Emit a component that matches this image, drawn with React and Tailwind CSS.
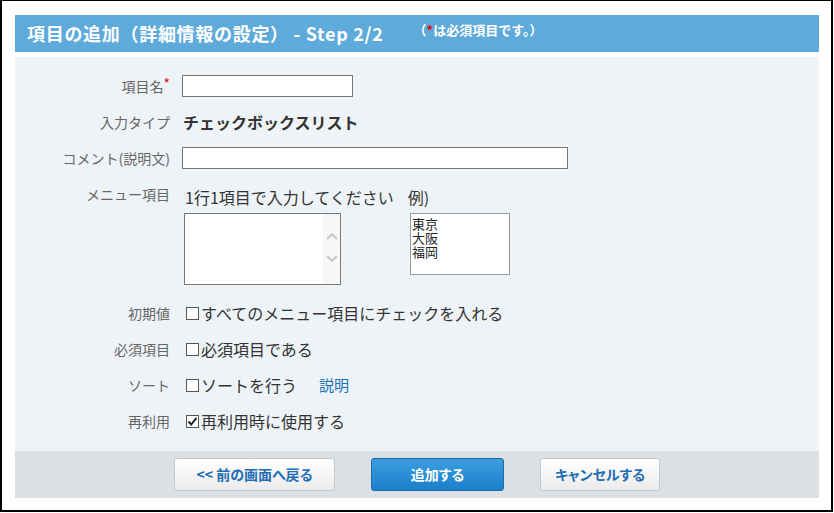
import React from 'react';

const jp = { fontFamily: '"Noto Sans CJK JP", "Noto Sans", sans-serif' };

function Box({ checked }) {
    return (
        <span className="inline-flex w-[13px] h-[13px] border border-[#555] bg-white items-center justify-center mr-[2px] shrink-0">
            {checked && (
                <svg width="11" height="11" viewBox="0 0 11 11">
                    <path d="M1.5 5.5 L4.2 8.5 L9.5 1.8" fill="none" stroke="#222" strokeWidth="2" />
                </svg>
            )}
        </span>
    );
}

function Row({ label, required, children }) {
    return (
        <div className="flex h-9 items-center">
            <div className="w-[155px] text-right text-[14px] text-[#666] shrink-0">
                {label}
                {required && <span className="text-[#e60012] relative -top-[3px]">*</span>}
            </div>
            <div className="pl-3 flex items-center text-[16px] text-[#333]">{children}</div>
        </div>
    );
}

export default function App() {
    return (
        <div className="w-[834px] h-[513px] bg-white" style={jp}>
            <div className="w-[833px] h-[512px] border-l-2 border-t border-r-2 border-b-2 border-black pl-[13px] pt-[14px]">
                <div className="w-[804px]">
                    {/* header */}
                    <div className="h-[37px] bg-[#5eaadb] flex items-center pl-3 text-white">
                        <span className="text-[18px] font-bold tracking-[0.7px]">項目の追加（詳細情報の設定） - Step 2/2</span>
                        <span className="ml-[30px] mb-[7px] text-[13px] font-bold">
                            （<span className="text-[#e60012]">*</span>は必須項目です。）
                        </span>
                    </div>

                    {/* form */}
                    <div className="mt-[5px] bg-[#eef3f7] pt-[11px] pb-3">
                        <Row label="項目名" required>
                            <input className="w-[171px] h-[22px] border border-[#767676] bg-white outline-none" />
                        </Row>
                        <Row label="入力タイプ">
                            <span className="ml-px font-bold">チェックボックスリスト</span>
                        </Row>
                        <Row label="コメント(説明文)">
                            <input className="w-[386px] h-[22px] border border-[#767676] bg-white outline-none" />
                        </Row>

                        <div className="flex items-start h-[119px]">
                            <div className="w-[155px] h-9 leading-9 text-right text-[14px] text-[#666] shrink-0">メニュー項目</div>
                            <div className="pl-3 text-[16px] text-[#333]">
                                <div className="h-[37px] flex items-center pl-[3px] pt-1">
                                    1行1項目で入力してください<span className="ml-[14px]">例)</span>
                                </div>
                                <div className="flex items-start">
                                    <div className="ml-[2px] w-[157px] h-[72px] border border-[#777] bg-white flex justify-end">
                                        <div className="w-[17px] h-full bg-[#f7f7f7] flex flex-col items-center pt-[19px] gap-[15px]">
                                            <svg width="12" height="7" viewBox="0 0 12 7">
                                                <path d="M1 6 L6 1.2 L11 6" fill="none" stroke="#c8c8c8" strokeWidth="2" />
                                            </svg>
                                            <svg width="12" height="7" viewBox="0 0 12 7">
                                                <path d="M1 1 L6 5.8 L11 1" fill="none" stroke="#c8c8c8" strokeWidth="2" />
                                            </svg>
                                        </div>
                                    </div>
                                    <div className="ml-[69px] w-[100px] h-[62px] border border-[#999] bg-white pl-px pt-[3px] text-[13px] leading-[14px] text-[#222] whitespace-pre-line">
                                        {'東京\n大阪\n福岡'}
                                    </div>
                                </div>
                            </div>
                        </div>

                        <Row label="初期値">
                            <span className="ml-[4px] flex items-center"><Box />すべてのメニュー項目にチェックを入れる</span>
                        </Row>
                        <Row label="必須項目">
                            <span className="ml-[4px] flex items-center"><Box />必須項目である</span>
                        </Row>
                        <Row label="ソート">
                            <span className="ml-[4px] flex items-center"><Box />ソートを行う</span>
                            <a className="ml-[22px] text-[15px] text-[#1a73b8] cursor-pointer">説明</a>
                        </Row>
                        <Row label="再利用">
                            <span className="ml-[4px] flex items-center"><Box checked />再利用時に使用する</span>
                        </Row>
                    </div>

                    {/* footer */}
                    <div className="h-[47px] bg-[#dbe0e4] flex items-center justify-center gap-9 text-[14px] font-bold [font-feature-settings:'palt']">
                        <button className="w-[161px] h-[33px] rounded-[3px] border border-[#c3c9cd] bg-gradient-to-b from-white to-[#ebebeb] text-[#1f6db2]">
                            &lt;&lt; 前の画面へ戻る
                        </button>
                        <button className="w-[133px] h-[33px] rounded-[3px] border border-[#1c6aa8] bg-gradient-to-b from-[#3b9ee0] to-[#1a7fca] text-white">
                            追加する
                        </button>
                        <button className="w-[120px] h-[33px] rounded-[3px] border border-[#c3c9cd] bg-gradient-to-b from-white to-[#ebebeb] text-[#1f6db2]">
                            キャンセルする
                        </button>
                    </div>
                </div>
            </div>
        </div>
    );
}
